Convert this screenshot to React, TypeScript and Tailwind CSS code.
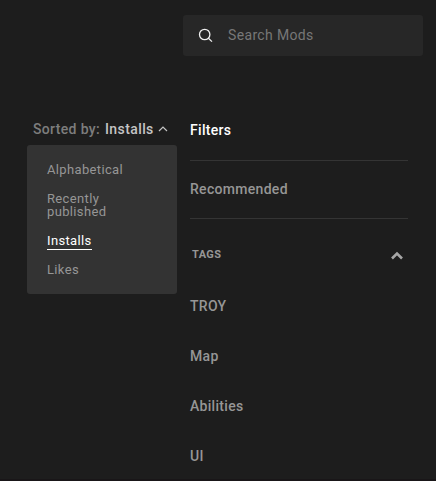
import React from "react";

const SORT_OPTIONS = ["Alphabetical", "Recently published", "Installs", "Likes"];
const TAGS = ["TROY", "Map", "Abilities", "UI"];

const SearchBar: React.FC = () => (
  <div className="ml-[183px] flex h-[41px] w-[240px] items-center rounded-[3px] bg-[#272727] pl-[15px]">
    <svg width="15" height="15" viewBox="0 0 15 15" fill="none" stroke="#f0f0f0" strokeWidth="1.3">
      <circle cx="6.7" cy="6.5" r="5.2" />
      <path d="M10.4 10.2 14 13.6" />
    </svg>
    <input
      type="text"
      placeholder="Search Mods"
      className="ml-[15px] w-40 bg-transparent text-[14px] tracking-[0.35px] text-white outline-none placeholder:text-[#777777]"
    />
  </div>
);

const SortMenu: React.FC = () => (
  <div className="w-[150px]">
    {/* Trigger */}
    <div className="flex h-5 items-center pl-1.5 text-[14px] font-medium whitespace-nowrap">
      <span className="w-[72px] tracking-[0.35px] text-[#7d7d7d]">Sorted by:</span>
      <span className="w-[53px] tracking-[0.4px] text-[#c4c4c4]">Installs</span>
      <svg width="10" height="6" viewBox="0 0 10 6" fill="none" stroke="#c4c4c4" strokeWidth="1.2">
        <path d="M1 5 5 1 9 5" />
      </svg>
    </div>

    {/* Options */}
    <ul className="mt-[6px] flex h-[149px] flex-col items-start gap-4 rounded-[3px] bg-[#333333] pt-[18px] pl-5 text-[13px] leading-[13px] tracking-[0.35px] text-[#969696]">
      {SORT_OPTIONS.map((option) => (
        <li
          key={option}
          className={option === "Installs" ? "-mb-[3px] border-b border-white pb-0.5 text-white" : "max-w-[90px]"}
        >
          {option}
        </li>
      ))}
    </ul>
  </div>
);

const FilterPanel: React.FC = () => (
  <div className="w-[218px] pt-px text-[14px] font-medium tracking-[0.3px] text-[#969696]">
    <h2 className="h-5 leading-5 text-white">Filters</h2>
    <div className="mt-5 flex h-[59px] items-center border-y border-[#343434]">Recommended</div>

    {/* Tags */}
    <div className="mt-[26px] flex h-5 items-center justify-between pr-1 pl-0.5">
      <h3 className="text-[11px] font-bold tracking-[0.4px]">TAGS</h3>
      <svg width="14" height="9" viewBox="0 0 14 9" fill="none" stroke="#a6a6a6" strokeWidth="2.6">
        <path d="M2 7.5 7 2.5 12 7.5" />
      </svg>
    </div>
    <ul className="mt-[31px] space-y-[30px]">
      {TAGS.map((tag) => (
        <li key={tag} className="h-5 leading-5">
          {tag}
        </li>
      ))}
    </ul>
  </div>
);

const App: React.FC = () => {
  return (
    <main className="h-[481px] w-[436px] overflow-hidden border-b-2 border-[#191618] bg-[#1d1d1d] pt-[15px] font-['Roboto',sans-serif]">
      <SearchBar />
      <div className="mt-[63px] flex gap-[13px] pl-[27px]">
        <SortMenu />
        <FilterPanel />
      </div>
    </main>
  );
};

export default App;
